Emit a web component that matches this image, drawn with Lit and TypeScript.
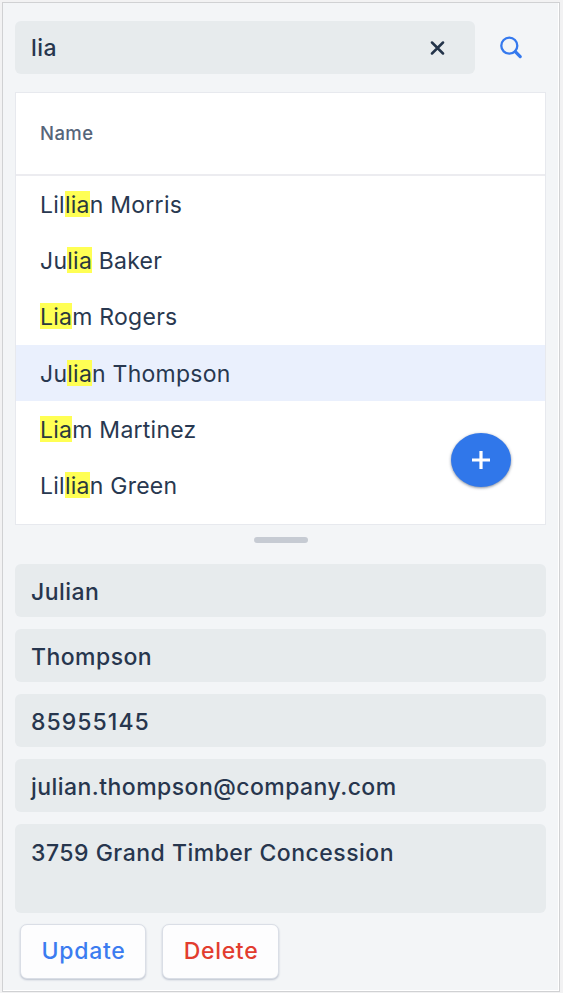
import { LitElement, html, css } from "lit";
import { customElement, property, state } from "lit/decorators.js";
import { classMap } from "lit/directives/class-map.js";

@customElement("contact-list")
class ContactList extends LitElement {
  @property() query = "";
  @property({ type: Array }) names: string[] = [];
  @property() selected = "";

  static styles = css`
    :host { display: block; position: relative; }
    .panel {
      box-sizing: border-box;
      height: 433px;
      border: 1px solid #e7e9ee;
      background: #fff;
      overflow: hidden;
    }
    .head {
      box-sizing: border-box;
      height: 83px;
      padding: 0 0 2px 24px;
      display: flex;
      align-items: center;
      border-bottom: 2px solid #ececf0;
      color: #56657a;
      font-size: 18.5px;
      font-weight: 500;
      letter-spacing: 0.4px;
    }
    .row {
      box-sizing: border-box;
      height: 56.25px;
      padding: 1.5px 0 0 24px;
      display: flex;
      align-items: center;
      color: #283850;
      font-size: 23px;
      letter-spacing: 0.25px;
      white-space: pre;
      cursor: pointer;
    }
    .row.active { background: #eaf0fd; }
    mark {
      background: #ffff54;
      color: #2b3a3e;
      line-height: 24px;
      padding-top: 2px;
      display: inline-block;
    }
    .add {
      position: absolute;
      right: 35px;
      bottom: 38px;
      width: 60px;
      height: 54px;
      padding: 0;
      border: 0;
      border-radius: 50%;
      background: #3077ea;
      box-shadow: 0 1px 3px rgba(30, 45, 75, 0.55);
      display: grid;
      place-items: center;
    }
  `;

  private label(name: string) {
    const at = name.toLowerCase().indexOf(this.query.toLowerCase());
    if (!this.query || at < 0) return name;
    const end = at + this.query.length;
    return html`<span>${name.slice(0, at)}<mark>${name.slice(at, end)}</mark>${name.slice(end)}</span>`;
  }

  render() {
    return html`
      <div class="panel">
        <div class="head"><span>Name</span></div>
        ${this.names.map(
          (n) => html`<div class=${classMap({ row: true, active: n === this.selected })}>${this.label(n)}</div>`
        )}
      </div>
      <button class="add" aria-label="Add">
        <svg width="20" height="20" viewBox="0 0 20 20" fill="none" stroke="#fff" stroke-width="3.2">
          <path d="M10 1v18M1 10h18" />
        </svg>
      </button>
    `;
  }
}

@customElement("app-root")
class AppRoot extends LitElement {
  @state() private query = "lia";
  private names = [
    "Lillian Morris",
    "Julia Baker",
    "Liam Rogers",
    "Julian Thompson",
    "Liam Martinez",
    "Lillian Green",
  ];
  private fields = ["Julian", "Thompson", "85955145", "julian.thompson@company.com"];

  static styles = css`
    :host {
      display: block;
      box-sizing: border-box;
      height: 993px;
      padding: 2px 3px 1px 2px;
      background: #f2f2f3;
      font-family: Inter, "Liberation Sans", sans-serif;
    }
    .frame {
      box-sizing: border-box;
      height: 990px;
      border: 1px solid #d0d1d3;
      box-shadow: inset -1px -1px 0 #fff;
      background: #f3f5f7;
      padding: 18px 13px 0 12px;
    }
    .search { display: flex; height: 53px; margin-bottom: 18px; }
    .field {
      box-sizing: border-box;
      height: 53px;
      padding: 2px 16px 0;
      border-radius: 6px;
      background: #e7ebed;
      display: flex;
      align-items: center;
      color: #27364e;
      font-size: 23px;
      font-weight: 500;
      letter-spacing: 0.45px;
    }
    .field.numeric { letter-spacing: 1.05px; }
    .query { width: 460px; justify-content: space-between; padding: 0 30px 0 16px; }
    .go { flex: 1; display: flex; align-items: center; padding-left: 25px; }
    .grip {
      width: 54px;
      height: 6px;
      margin: 12px auto 21px;
      border-radius: 3px;
      background: #c6cbd3;
    }
    .form { display: flex; flex-direction: column; gap: 12.1px; }
    .address { height: 89px; align-items: flex-start; padding-top: 15px; letter-spacing: 0.5px; }
    .actions { display: flex; gap: 16px; padding: 11px 0 0 5px; }
    .btn {
      box-sizing: border-box;
      height: 55px;
      border: 1px solid #dadee6;
      border-radius: 7px;
      background: #fdfdfe;
      box-shadow: 0 1px 2px #bcc2cf;
      padding: 0 0 1px 1px;
      font: 500 23px Inter, "Liberation Sans", sans-serif;
      letter-spacing: 0.7px;
    }
    .update { width: 126px; color: #3b7cf0; }
    .delete { width: 117px; color: #e23c2e; }
  `;

  render() {
    return html`
      <div class="frame">
        <div class="search">
          <div class="field query">
            <span>${this.query}</span>
            <svg width="15" height="15" viewBox="0 0 15 15" fill="none" stroke="#24344a" stroke-width="2.5" stroke-linecap="round">
              <path d="M2 2.5l11 11M13 2.5L2 13.5" />
            </svg>
          </div>
          <div class="go">
            <svg width="23" height="23" viewBox="0 0 23 23" fill="none" stroke="#3579ee">
              <circle cx="9.3" cy="9.7" r="8" stroke-width="2.3" />
              <path d="M15.3 15.7l4.9 4.9" stroke-width="3.3" stroke-linecap="round" />
            </svg>
          </div>
        </div>
        <contact-list .query=${this.query} .names=${this.names} selected="Julian Thompson"></contact-list>
        <div class="grip"></div>
        <div class="form">
          ${this.fields.map(
            (f) => html`<div class=${classMap({ field: true, numeric: /^\d+$/.test(f) })}><span>${f}</span></div>`
          )}
          <div class="field address"><span>3759 Grand Timber Concession</span></div>
        </div>
        <div class="actions">
          <button class="btn update">Update</button>
          <button class="btn delete">Delete</button>
        </div>
      </div>
    `;
  }
}
